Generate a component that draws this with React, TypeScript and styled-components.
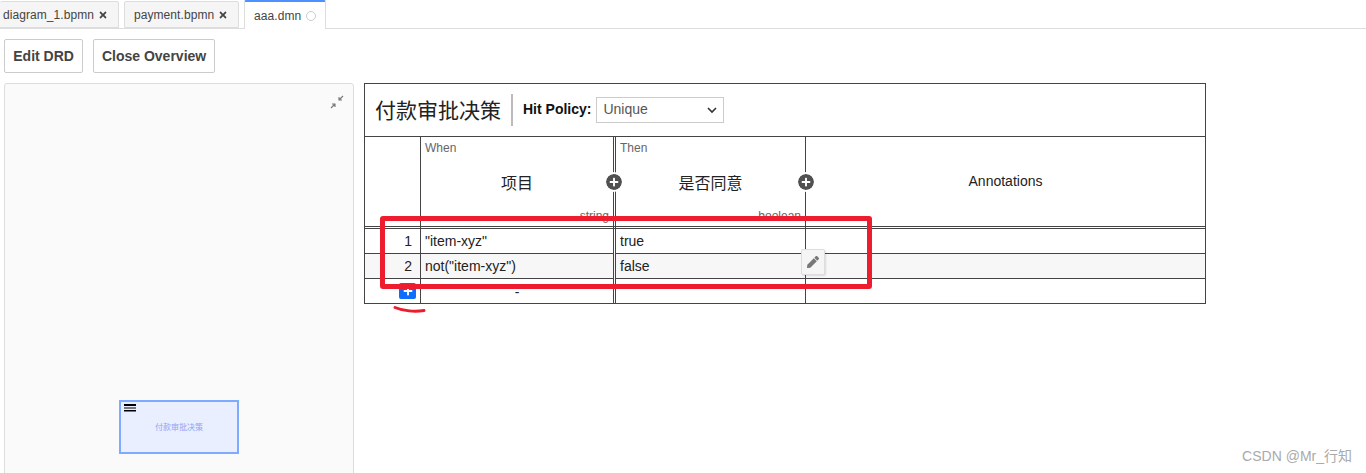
import React from 'react';
import styled, { createGlobalStyle } from 'styled-components';
import { FaPlus, FaPen, FaTimes } from 'react-icons/fa';

const GlobalStyle = createGlobalStyle`
  html, body {
    margin: 0;
    padding: 0;
    background: #fff;
    overflow: hidden;
  }
  body {
    font-family: "Liberation Sans", "Noto Sans CJK SC", sans-serif;
    color: #444;
  }
`;

const Page = styled.div`
  width: 1366px;
  height: 473px;
  position: relative;
  overflow: hidden;
`;

const TabBar = styled.div`
  height: 28px;
  display: flex;
  gap: 5px;
  border-bottom: 1px solid #ddd;
`;

const Tab = styled.div<{ $active?: boolean; $width: number }>`
  width: ${(p) => p.$width}px;
  height: ${(p) => (p.$active ? 29 : 27)}px;
  margin-top: ${(p) => (p.$active ? 0 : 1)}px;
  box-sizing: border-box;
  display: flex;
  align-items: center;
  font-size: 12px;
  letter-spacing: 0.07px;
  color: #444;
  background: ${(p) => (p.$active ? '#fff' : '#f5f5f5')};
  border: 1px solid #ddd;
  border-bottom: ${(p) => (p.$active ? 'none' : '1px solid #ddd')};
  border-top: ${(p) => (p.$active ? '2px solid #4d90ff' : '1px solid #ddd')};
  border-radius: 2px 2px 0 0;
  padding-left: 9px;
  &:first-child {
    padding-left: 3px;
    border-left: none;
  }
`;

const CloseIcon = styled(FaTimes)`
  font-size: 10px;
  margin-left: 4px;
  color: #444;
`;

const DirtyDot = styled.span`
  width: 8px;
  height: 8px;
  margin-left: 5px;
  margin-top: 1px;
  border: 1px solid #ccc;
  border-radius: 50%;
`;

const Toolbar = styled.div`
  display: flex;
  gap: 9.5px;
  padding: 10px 4px 10px;
`;

const ToolButton = styled.button`
  height: 34px;
  padding: 0 8.25px;
  box-sizing: border-box;
  background: #fff;
  border: 1px solid #ccc;
  border-radius: 2px;
  font-family: inherit;
  font-size: 14px;
  font-weight: bold;
  color: #444;
`;

const Workspace = styled.div`
  display: flex;
  align-items: flex-start;
  padding-left: 4px;
`;

const Overview = styled.div`
  position: relative;
  width: 350px;
  height: 400px;
  box-sizing: border-box;
  background: #fafafa;
  border: 1px solid #ddd;
  border-radius: 3px;
  flex: none;
`;

const CollapseIcon = styled.svg`
  position: absolute;
  top: 11px;
  right: 9px;
  width: 14px;
  height: 14px;
`;

const MiniDecision = styled.div`
  position: absolute;
  left: 114px;
  top: 316px;
  width: 120px;
  height: 54px;
  box-sizing: border-box;
  background: #e9efff;
  border: 2px solid #7eabff;
  padding-bottom: 2px;
  display: flex;
  align-items: center;
  justify-content: center;
  font-size: 8px;
  color: #8fa3f5;
`;

const MiniIcon = styled.svg`
  position: absolute;
  left: 3px;
  top: 2px;
  width: 12px;
  height: 8px;
`;

const DecisionTable = styled.div`
  position: relative;
  margin-left: 10px;
  width: 842px;
  height: 221px;
  box-sizing: border-box;
  border: 1px solid #444;
  flex: none;
`;

const TitleRow = styled.div`
  height: 53px;
  box-sizing: border-box;
  display: flex;
  align-items: center;
  border-bottom: 1px solid #444;
  padding-left: 10px;
`;

const TableName = styled.div`
  font-size: 21px;
  color: #222;
  padding: 1px 10px 0 0;
  line-height: 31px;
  border-right: 2px solid #bbb;
`;

const HitLabel = styled.span`
  font-size: 14px;
  font-weight: bold;
  color: #111;
  margin: 0 0 2px 10px;
`;

const HitSelect = styled.div`
  width: 128px;
  height: 26px;
  margin-left: 5px;
  box-sizing: border-box;
  border: 1px solid #ccc;
  display: flex;
  align-items: center;
  justify-content: space-between;
  padding: 0 6px 2px 6px;
  font-size: 14px;
  color: #555;
`;

const Chevron = styled.svg`
  width: 10px;
  height: 7px;
  margin-top: 2px;
`;

const Grid = styled.div`
  display: grid;
  grid-template-columns: 56px 192px 3px 190px 399px;
`;

const HeadCell = styled.div<{ $divider?: boolean; $cjk?: boolean }>`
  position: relative;
  height: 92px;
  box-sizing: border-box;
  border-bottom: 3px double #444;
  border-right: ${(p) => (p.$divider ? '1px solid #444' : 'none')};
  display: flex;
  align-items: center;
  justify-content: center;
  font-size: ${(p) => (p.$cjk ? 16 : 14)}px;
  padding: ${(p) => (p.$cjk ? '1px 0 0' : '0 0 1px')};
  color: #222;
`;

const ClauseKind = styled.span`
  position: absolute;
  left: 4px;
  top: 4px;
  font-size: 12px;
  color: #666;
`;

const TypeRef = styled.span`
  position: absolute;
  right: 4px;
  bottom: 3px;
  font-size: 12px;
  color: #666;
`;

const AddColumn = styled.span`
  position: absolute;
  right: -9px;
  top: 37px;
  width: 16px;
  height: 16px;
  border-radius: 50%;
  background: #505050;
  outline: 2px solid #fff;
  color: #fff;
  display: flex;
  align-items: center;
  justify-content: center;
  font-size: 10px;
  z-index: 1;
`;

const Gap = styled.div<{ $height: number; $stripe?: boolean; $head?: boolean }>`
  height: ${(p) => p.$height}px;
  box-sizing: border-box;
  border-left: 1px solid #444;
  border-right: 1px solid #444;
  border-bottom: ${(p) => (p.$head ? '3px double #444' : 'none')};
  background: ${(p) => (p.$stripe ? '#f7f7f7' : '#fff')};
`;

const BodyCell = styled.div<{ $stripe?: boolean; $num?: boolean; $center?: boolean; $last?: boolean; $divider?: boolean }>`
  height: ${(p) => (p.$last ? 24 : 25)}px;
  box-sizing: border-box;
  border-bottom: ${(p) => (p.$last ? 'none' : '1px solid #444')};
  border-right: ${(p) => (p.$divider ? '1px solid #444' : 'none')};
  background: ${(p) => (p.$stripe ? '#f7f7f7' : '#fff')};
  display: flex;
  align-items: center;
  padding: ${(p) => (p.$center ? '2px' : '0')} 4px 0;
  font-size: 14px;
  color: #222;
  justify-content: ${(p) => (p.$num ? 'flex-end' : p.$center ? 'center' : 'flex-start')};
  padding-right: ${(p) => (p.$num ? '8px' : '4px')};
`;

const AddRule = styled.span`
  position: absolute;
  left: 34px;
  bottom: 4px;
  width: 17px;
  height: 16px;
  background: #0d6efd;
  border-radius: 2px;
  color: #fff;
  display: flex;
  align-items: center;
  justify-content: center;
  font-size: 10px;
  z-index: 1;
`;

const EditButton = styled.span`
  position: absolute;
  left: 436px;
  top: 165px;
  width: 24px;
  height: 26px;
  box-sizing: border-box;
  background: #f5f5f5;
  border: 1px solid #ddd;
  box-shadow: 1px 1px 2px rgba(0, 0, 0, 0.12);
  border-radius: 2px;
  color: #777;
  display: flex;
  align-items: center;
  justify-content: center;
  font-size: 12px;
  z-index: 1;
`;

const RedBox = styled.div`
  position: absolute;
  left: 15px;
  top: 132px;
  width: 482px;
  height: 63px;
  box-sizing: content-box;
  border: 5px solid #ed1c2e;
  border-radius: 3px;
  z-index: 2;
  pointer-events: none;
`;

const RedStroke = styled.svg`
  position: absolute;
  left: 28px;
  bottom: -12px;
  width: 36px;
  height: 10px;
  z-index: 2;
`;

const Watermark = styled.div`
  position: absolute;
  right: 14px;
  bottom: 8px;
  font-size: 14px;
  color: #aaa;
`;

export default function App() {
  return (
    <Page>
      <GlobalStyle />
      <TabBar>
        <Tab $width={119}>
          diagram_1.bpmn
          <CloseIcon />
        </Tab>
        <Tab $width={115}>
          payment.bpmn
          <CloseIcon />
        </Tab>
        <Tab $active $width={82}>
          aaa.dmn
          <DirtyDot />
        </Tab>
      </TabBar>

      <Toolbar>
        <ToolButton>Edit DRD</ToolButton>
        <ToolButton>Close Overview</ToolButton>
      </Toolbar>

      <Workspace>
        <Overview>
          <CollapseIcon viewBox="0 0 14 14">
            <path d="M13 1 L9 5 M9 2 V5 H12" stroke="#777" strokeWidth="1.1" fill="none" />
            <path d="M1 13 L5 9 M2 9 H5 V12" stroke="#777" strokeWidth="1.1" fill="none" />
          </CollapseIcon>
          <MiniDecision>
            <MiniIcon viewBox="0 0 12 8">
              <rect x="0" y="0" width="12" height="2" fill="#000" />
              <rect x="0" y="3.5" width="12" height="1" fill="#000" />
              <rect x="0" y="6" width="12" height="1.5" fill="#000" />
            </MiniIcon>
            付款审批决策
          </MiniDecision>
        </Overview>

        <DecisionTable>
          <TitleRow>
            <TableName>付款审批决策</TableName>
            <HitLabel>Hit Policy:</HitLabel>
            <HitSelect>
              Unique
              <Chevron viewBox="0 0 10 7">
                <path d="M1 1 L5 5 L9 1" stroke="#333" strokeWidth="1.6" fill="none" />
              </Chevron>
            </HitSelect>
          </TitleRow>

          <Grid>
            <HeadCell $divider />
            <HeadCell $cjk>
              <ClauseKind>When</ClauseKind>
              项目
              <TypeRef>string</TypeRef>
              <AddColumn>
                <FaPlus />
              </AddColumn>
            </HeadCell>
            <Gap $height={92} $head />
            <HeadCell $cjk $divider>
              <ClauseKind>Then</ClauseKind>
              是否同意
              <TypeRef>boolean</TypeRef>
              <AddColumn>
                <FaPlus />
              </AddColumn>
            </HeadCell>
            <HeadCell>Annotations</HeadCell>

            <BodyCell $num $divider>1</BodyCell>
            <BodyCell>"item-xyz"</BodyCell>
            <Gap $height={25} />
            <BodyCell $divider>true</BodyCell>
            <BodyCell />

            <BodyCell $stripe $num $divider>2</BodyCell>
            <BodyCell $stripe>not("item-xyz")</BodyCell>
            <Gap $height={25} $stripe />
            <BodyCell $stripe $divider>false</BodyCell>
            <BodyCell $stripe />

            <BodyCell $last $divider />
            <BodyCell $last $center>-</BodyCell>
            <Gap $height={24} />
            <BodyCell $last $divider />
            <BodyCell $last />
          </Grid>

          <AddRule>
            <FaPlus />
          </AddRule>
          <EditButton>
            <FaPen />
          </EditButton>
          <RedBox />
          <RedStroke viewBox="0 0 36 10">
            <path d="M2 2.5 C10 6 22 7 31 5.5" stroke="#ed1c2e" strokeWidth="3" fill="none" strokeLinecap="round" />
          </RedStroke>
        </DecisionTable>
      </Workspace>

      <Watermark>CSDN @Mr_行知</Watermark>
    </Page>
  );
}
